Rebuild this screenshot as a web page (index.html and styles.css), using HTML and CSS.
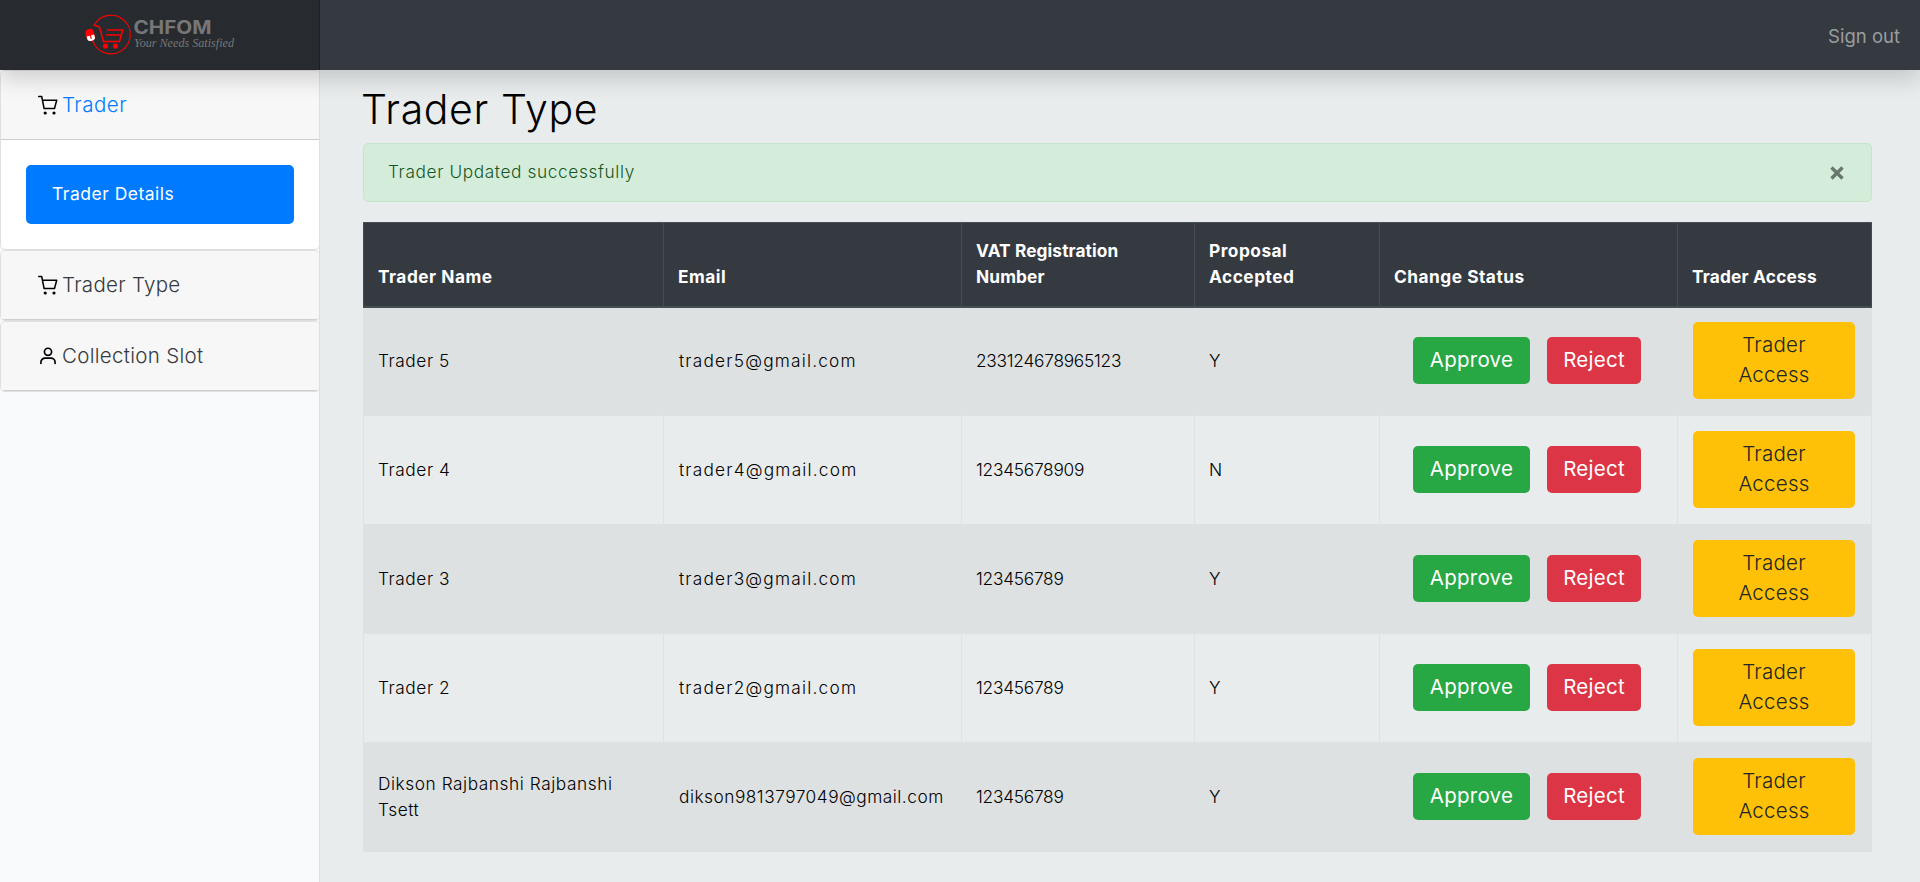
FILE: index.html
```html
<!DOCTYPE html>
<html lang="en">
<head>
<meta charset="utf-8">
<title>Trader Type</title>
<link rel="stylesheet" href="styles.css">
</head>
<body>
<header class="navbar">
  <a class="brand">
    <svg class="logo" width="152" height="44" viewBox="0 0 152 44">
      <g fill="none" stroke="#f00" stroke-linecap="round" stroke-linejoin="round">
        <path stroke-width="1.1" d="M10.5 11.500A19.300 19.300 0 1 1 9.200 29"/>
        <path stroke-width="1.500" d="M10 12l5.500 2 4 14.500h16l3.200-11.500H23.500M22.500 22h13.500M9.300 29l-1-3"/>
      </g>
      <circle cx="21.500" cy="33" r="2.600" fill="#f00"/><circle cx="31.500" cy="33" r="2.600" fill="#f00"/>
      <g transform="rotate(-15 6 22)"><rect x="2" y="16" width="8.500" height="12" rx="3.800" fill="#f00"/><path fill="#fff" d="M2.400 22.500h7.700v3.500q-.5 2-3.800 2t-3.900-2z"/><path stroke="#f00" stroke-width="1.200" d="M6.250 22v4"/></g>
      <text class="logo-name" x="49.500" y="20.500" textLength="78" lengthAdjust="spacingAndGlyphs">CHFOM</text>
      <text class="logo-tag" x="50" y="34" textLength="100" lengthAdjust="spacingAndGlyphs">Your Needs Satisfied</text>
    </svg>
  </a>
  <a class="signout">Sign out</a>
</header>
<div class="layout">
  <nav class="sidebar">
    <section class="card">
      <div class="card-header active"><svg class="icon"><use href="#trolley"/></svg><span>Trader</span></div>
      <div class="card-body"><a class="pill">Trader Details</a></div>
    </section>
    <section class="card">
      <div class="card-header"><svg class="icon"><use href="#trolley"/></svg><span>Trader Type</span></div>
    </section>
    <section class="card">
      <div class="card-header"><svg class="icon" viewBox="0 0 24 24" fill="none" stroke="#000" stroke-width="2" stroke-linecap="round"><circle cx="12" cy="7" r="4.300"/><path d="M3.500 21v-1.500a5 5 0 0 1 5-5h7a5 5 0 0 1 5 5V21"/></svg><span>Collection Slot</span></div>
    </section>
  </nav>
  <main class="content">
    <h1>Trader Type</h1>
    <div class="alert"><span>Trader Updated successfully</span><svg class="close" viewBox="0 0 14 14"><path d="M1.500 1.500l11 11M12.500 1.500l-11 11"/></svg></div>
    <table>
      <colgroup><col class="c-name"><col class="c-email"><col class="c-vat"><col class="c-prop"><col class="c-status"><col class="c-access"></colgroup>
      <thead><tr><th>Trader Name</th><th>Email</th><th class="vat">VAT Registration<br>Number</th><th>Proposal<br>Accepted</th><th>Change Status</th><th class="acc">Trader Access</th></tr></thead>
      <tbody>
        <tr><td>Trader 5</td><td class="mail">trader5@gmail.com</td><td class="num">233124678965123</td><td>Y</td><td><div class="actions"><a class="btn approve">Approve</a><a class="btn reject">Reject</a></div></td><td><a class="btn access">Trader<br>Access</a></td></tr>
        <tr><td>Trader 4</td><td class="mail">trader4@gmail.com</td><td class="num">12345678909</td><td>N</td><td><div class="actions"><a class="btn approve">Approve</a><a class="btn reject">Reject</a></div></td><td><a class="btn access">Trader<br>Access</a></td></tr>
        <tr><td>Trader 3</td><td class="mail">trader3@gmail.com</td><td class="num">123456789</td><td>Y</td><td><div class="actions"><a class="btn approve">Approve</a><a class="btn reject">Reject</a></div></td><td><a class="btn access">Trader<br>Access</a></td></tr>
        <tr><td>Trader 2</td><td class="mail">trader2@gmail.com</td><td class="num">123456789</td><td>Y</td><td><div class="actions"><a class="btn approve">Approve</a><a class="btn reject">Reject</a></div></td><td><a class="btn access">Trader<br>Access</a></td></tr>
        <tr><td>Dikson Rajbanshi Rajbanshi<br>Tsett</td><td class="mail long">dikson9813797049@gmail.com</td><td class="num">123456789</td><td>Y</td><td><div class="actions"><a class="btn approve">Approve</a><a class="btn reject">Reject</a></div></td><td><a class="btn access">Trader<br>Access</a></td></tr>
      </tbody>
    </table>
  </main>
</div>
<svg class="defs" width="0" height="0">
  <symbol id="trolley" viewBox="0 0 20 20"><path d="M.7 1.500h3l2.400 12h10.400l2.200-8.300H4.500" fill="none" stroke="#000" stroke-width="1.500" stroke-linecap="round" stroke-linejoin="round"/><circle cx="7.200" cy="18" r="1.600"/><circle cx="16" cy="18" r="1.600"/></symbol>
</svg>
</body>
</html>
```
FILE: styles.css
```css
* { box-sizing: border-box; }
body {
  margin: 0;
  height: 882px;
  overflow: hidden;
  background: #e9eced;
  color: #000;
  font-family: Inter, "Open Sans", sans-serif;
  font-weight: 340;
  font-size: 17.300px;
  line-height: 26px;
  display: flex;
  flex-direction: column;
}
.defs { display: none; }
.navbar {
  position: relative;
  z-index: 2;
  flex: none;
  height: 70px;
  display: flex;
  justify-content: space-between;
  align-items: center;
  background: #343a40;
  box-shadow: 0 10px 20px rgba(0, 0, 0, .15);
}
.brand {
  width: 320px;
  height: 70px;
  padding: 13px 0 0 84px;
  background: rgba(0, 0, 0, .25);
  box-shadow: inset -1px 0 0 rgba(0, 0, 0, .25);
}
.logo { display: block; overflow: visible; }
.logo-name { font: 700 19px Inter, sans-serif; fill: #777; }
.logo-tag { font: italic 400 13.500px "Liberation Serif", serif; fill: #777; }
.signout { margin: 2px 20px 0 0; color: #9a9da0; font-size: 18.500px; font-weight: 400; }
.layout { flex: 1; display: flex; }
.sidebar {
  width: 320px;
  flex: none;
  background: #f8f9fb;
  box-shadow: inset -1px 0 0 rgba(0, 0, 0, .1);
}
.card { border: 1px solid #dfdfdf; border-radius: 5px; background: #fff; overflow: hidden; }
.card-header {
  height: 69px;
  padding-left: 37px;
  display: flex;
  align-items: center;
  gap: 4px;
  background: #f7f7f7;
  border-bottom: 1px solid #cfcfcf;
  color: #343a40;
  font-size: 20.500px;
  letter-spacing: .3px;
}
.card-header.active { color: #007bff; letter-spacing: .5px; }
.icon { width: 20px; height: 20px; }
.card-body { height: 109px; padding: 25px; }
.pill {
  display: flex;
  align-items: center;
  height: 59px;
  padding: 0 26px 2px;
  border-radius: 5px;
  background: #007bff;
  color: #fff;
  font-size: 17.500px;
  font-weight: 400;
  letter-spacing: .5px;
}
.content { flex: 1; padding: 15px 49px 0 43px; }
h1 { margin: 0 0 0 -2px; height: 58px; font-size: 41px; font-weight: 330; line-height: 48px; letter-spacing: .600px; }
.alert {
  height: 59px;
  margin-bottom: 20px;
  padding: 0 27px 1px 24px;
  display: flex;
  justify-content: space-between;
  align-items: center;
  border: 1px solid #c3e6cb;
  border-radius: 5px;
  background: #d4edda;
  color: #155724;
  letter-spacing: .6px;
}
.close { width: 14px; height: 14px; margin-top: 1px; fill: none; stroke: #6a776d; stroke-width: 3.400; }
table { width: 1508px; table-layout: fixed; border-collapse: collapse; }
.c-name { width: 300px; }
.c-email { width: 298px; }
.c-vat { width: 233px; }
.c-prop { width: 185px; }
.c-status { width: 298px; }
.c-access { width: 194px; }
th {
  height: 84px;
  padding: 0 14px 16px;
  text-align: left;
  vertical-align: bottom;
  background: #343a40;
  border: 1px solid #454d55;
  border-bottom-width: 2px;
  color: #fff;
  font-weight: 680;
  letter-spacing: .5px;
}
.vat { letter-spacing: .1px; }
.acc { letter-spacing: .2px; }
td { height: 109px; padding: 0 14px; vertical-align: middle; border: 1px solid #dee2e4; white-space: nowrap; letter-spacing: .55px; }
.mail { padding-left: 15px; letter-spacing: 1.200px; }
.mail.long { letter-spacing: .5px; }
.num { letter-spacing: -.25px; }
tbody tr:nth-child(odd) { background: #dde1e2; }
.actions { display: flex; gap: 17px; padding-left: 19px; margin-bottom: 2px; }
.btn {
  display: flex;
  align-items: center;
  justify-content: center;
  height: 47px;
  border-radius: 5px;
  color: #fff;
  font-size: 20.500px;
  font-weight: 400;
  line-height: 30px;
  letter-spacing: .25px;
}
.approve { width: 117px; background: #28a745; }
.reject { width: 94px; background: #dc3545; }
.access { width: 162px; height: 77px; margin: 0 0 2px 1px; background: #ffc107; color: #212529; font-weight: 340; text-align: center; }
```
